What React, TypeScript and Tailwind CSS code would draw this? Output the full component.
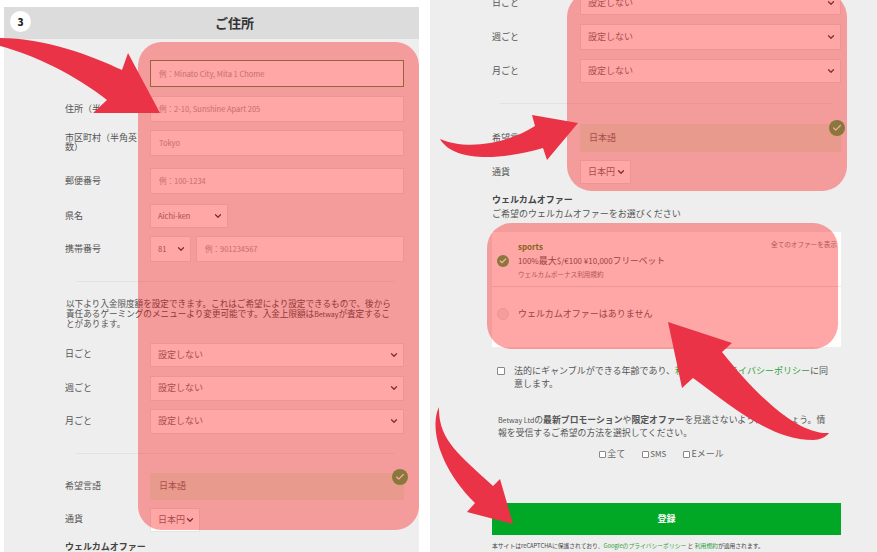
import { ChevronDown, Check } from 'lucide-react'

const font = { fontFamily: '"Noto Sans CJK JP", "Noto Sans", sans-serif' }

function Field({ placeholder, focus = false }: { placeholder: string; focus?: boolean }) {
  return (
    <input
      readOnly
      placeholder={placeholder}
      className={`w-full h-full bg-white border pl-2 pb-px text-[7.5px] outline-none placeholder:text-[#a8a8a8] ${focus ? 'border-[#5f9a58]' : 'border-[#e4e4e4]'}`}
    />
  )
}

function Pick({ value, small = false, className = '' }: { value: string; small?: boolean; className?: string }) {
  return (
    <div className={`h-full bg-white border border-[#e4e4e4] pl-[7px] pr-1 flex items-center justify-between whitespace-nowrap text-[#777] ${small ? 'text-[7.5px]' : 'text-[9px]'} ${className}`}>
      <span>{value}</span>
      <ChevronDown size={10} strokeWidth={3} className="text-[#444] shrink-0" />
    </div>
  )
}

function Row({ label, wide = false, className, children }: { label: string; wide?: boolean; className: string; children: React.ReactNode }) {
  return (
    <div className={`flex items-center ${className}`}>
      <div className={`shrink-0 text-[9px] leading-[9px] text-[#555] ${wide ? 'w-[88px] pr-[16px] pb-px' : 'w-[85px] pr-[13px] pb-[2px]'}`}>{label}</div>
      <div className="flex-1 h-full flex gap-[5px] min-w-0">{children}</div>
    </div>
  )
}

function Locked() {
  return (
    <div className="relative w-full h-full bg-[#dcecd8] pl-[9px] flex items-center text-[9px] text-[#777]">
      日本語
      <div className="absolute -right-[4px] -top-[4px] w-4 h-4 rounded-full bg-[#4ab85a] flex items-center justify-center">
        <Check size={10} strokeWidth={3} className="text-white" />
      </div>
    </div>
  )
}

function Tick({ label, className = 'text-[9px]' }: { label: string; className?: string }) {
  return (
    <span className={`flex items-center gap-px ${className}`}>
      <i className="w-[7px] h-[7px] border border-[#888] bg-white rounded-[1px]" />
      {label}
    </span>
  )
}

export default function App() {
  return (
    <div style={font} className="relative flex w-[877px] h-[552px] overflow-hidden bg-white">
      {/* ── Left panel ─────────────────────────────────────── */}
      <section className="w-[415px] ml-1 mt-[7px] shrink-0 bg-[#eeeeee] pl-[61px] pr-[15px]">
        <header className="relative -ml-[61px] -mr-[15px] h-8 bg-[#dcdcdc] flex items-center justify-center text-[13px] font-bold text-[#333] pl-[46px]">
          ご住所
          <div className="absolute left-[6px] top-[4px] w-[21px] h-[21px] rounded-full bg-white flex items-center justify-center text-[10px] font-black text-[#222]">3</div>
        </header>

        <Row label="" className="h-[27px] mt-[21px]">
          <Field placeholder="例：Minato City, Mita 1 Chome" focus />
        </Row>
        <Row label="住所（半角英数）" className="h-[26px] mt-[9px]">
          <Field placeholder="例：2-10, Sunshine Apart 205" />
        </Row>
        <Row label="市区町村（半角英数）" className="h-[26px] mt-[8px]">
          <Field placeholder="Tokyo" />
        </Row>
        <Row label="郵便番号" className="h-[26px] mt-[12px]">
          <Field placeholder="例：100-1234" />
        </Row>
        <Row label="県名" className="h-[24px] mt-[10px]">
          <Pick value="Aichi-ken" small className="w-[78px]" />
        </Row>
        <Row label="携帯番号" className="h-[26px] mt-[8px]">
          <Pick value="81" small className="w-[41px] shrink-0" />
          <Field placeholder="例：901234567" />
        </Row>

        <div className="h-px bg-[#e2e2e2] ml-[11px] mr-[9px] mt-[19px]" />
        <p className="mt-[17px] ml-px whitespace-nowrap text-[8.6px] leading-[9.5px] text-[#555]">
          以下より入金限度額を設定できます。これはご希望により設定できるもので、後から
          <br />
          責任あるゲーミングのメニューより変更可能です。入金上限額は<span className="text-[7px]">Betway</span>が査定するこ
          <br />
          とがあります。
        </p>

        <Row label="日ごと" className="h-[24px] mt-[14px]"><Pick value="設定しない" className="w-full" /></Row>
        <Row label="週ごと" className="h-[25px] mt-[9px]"><Pick value="設定しない" className="w-full" /></Row>
        <Row label="月ごと" className="h-[25px] mt-[8px]"><Pick value="設定しない" className="w-full" /></Row>

        <div className="h-px bg-[#e2e2e2] ml-[11px] mr-[9px] mt-[19px]" />

        <Row label="希望言語" className="h-[27px] mt-[19px]"><Locked /></Row>
        <Row label="通貨" className="h-[24px] mt-[8px]"><Pick value="日本円" className="w-[50px]" /></Row>
        <h3 className="mt-[8px] text-[9px] leading-[14px] font-bold text-[#444]">ウェルカムオファー</h3>
      </section>

      {/* ── Right panel ────────────────────────────────────── */}
      <section className="ml-[11px] flex-1 bg-[#eeeeee] pl-[62px] pr-[36px] pt-px">
        <Row wide label="日ごと" className="h-[25px] -mt-[11px]"><Pick value="設定しない" className="w-full" /></Row>
        <Row wide label="週ごと" className="h-[26px] mt-[9px]"><Pick value="設定しない" className="w-full" /></Row>
        <Row wide label="月ごと" className="h-[24px] mt-[9px]"><Pick value="設定しない" className="w-full" /></Row>

        <div className="h-px bg-[#e2e2e2] ml-[8px] mr-[9px] mt-[20px]" />

        <Row wide label="希望言語" className="h-[28px] mt-[20px]"><Locked /></Row>
        <Row wide label="通貨" className="h-[24px] mt-[8px]"><Pick value="日本円" className="w-[51px]" /></Row>

        <h3 className="mt-[9px] text-[9px] leading-[14px] font-bold text-[#444]">ウェルカムオファー</h3>
        <p className="text-[9px] leading-[13px] text-[#555]">ご希望のウェルカムオファーをお選びください</p>

        <div className="mt-[12px] h-[115px] bg-white text-[#666]">
          <div className="relative h-[55px] flex items-center pl-[5px] pt-[3px] border-b border-[#e8e8e8]">
            <div className="w-3 h-3 rounded-full bg-[#4ab85a] flex items-center justify-center shrink-0">
              <Check size={8} strokeWidth={4} className="text-white" />
            </div>
            <div className="ml-[9px]">
              <div className="text-[8px] leading-[10px] font-bold text-[#3f9a2a]">sports</div>
              <div className="mt-[2px] text-[9px] leading-[13px]">
                <span className="text-[8px]">100%</span>最大<span className="text-[8px]">$/€100 ¥10,000</span><span className="text-[8.7px]">フリーベット</span>
              </div>
              <div className="mt-[2px] text-[6.6px] leading-[10px] text-[#888]">ウェルカムボーナス利用規約</div>
            </div>
            <span className="absolute right-[4px] top-[7px] text-[6.6px] leading-[10px] text-[#888]">全てのオファーを表示</span>
          </div>
          <div className="h-[60px] flex items-center pl-[5px] -mt-[3px]">
            <div className="w-3 h-3 rounded-full bg-[#f0f0f0] border border-[#e4e4e4] shrink-0" />
            <span className="ml-[9px] text-[9px]">ウェルカムオファーはありません</span>
          </div>
        </div>

        <label className="mt-[17px] flex items-start pl-[5px] text-[9px] leading-[13px] text-[#555]">
          <span className="mt-[3px] w-[8px] h-[8px] bg-white border border-[#888] rounded-[1px] shrink-0" />
          <span className="ml-[9px] w-[318px]">
            法的にギャンブルができる年齢であり、<span className="text-[#2f9e3a]">利用規約とプライバシーポリシー</span>に同意します。
          </span>
        </label>

        <p className="mt-[24px] ml-[6px] w-[332px] text-[8.85px] leading-[12.5px] text-[#555]">
          <span className="text-[7px]">Betway Ltd</span>の<b>最新プロモーション</b>や<b>限定オファー</b>を見逃さないようにしましょう。情報を受信するご希望の方法を選択してください。
        </p>

        <div className="mt-[8px] flex justify-center gap-[17px] pr-[10px] leading-[14px] text-[#666]">
          <Tick label="全て" />
          <Tick label="SMS" className="text-[8px]" />
          <Tick label="Eメール" />
        </div>

        <button className="mt-[42px] w-full h-[32px] bg-[#00a826] text-white text-[9px] font-bold">登録</button>
        <p className="mt-[6px] whitespace-nowrap text-[5.8px] leading-[9px] text-[#444]">
          本サイトはreCAPTCHAに保護されており、<span className="text-[#2f9e3a]">Googleのプライバシーポリシー</span> と <span className="text-[#2f9e3a]">利用規約</span>が適用されます。
        </p>
      </section>

      {/* ── Highlight overlays ─────────────────────────────── */}
      <div className="absolute left-[138px] top-[42px] w-[281px] h-[488px] rounded-[24px] bg-[#ff0000]/35" />
      <div className="absolute left-[567px] -top-[8px] w-[280px] h-[199px] rounded-[25px] bg-[#ff0000]/35" />
      <div className="absolute left-[487px] top-[223px] w-[351px] h-[126px] rounded-[25px] bg-[#ff0000]/35" />

      {/* ── Arrows ─────────────────────────────────────────── */}
      <svg className="absolute inset-0" width="877" height="552" viewBox="0 0 877 552" fill="#ea3346">
        <path d="M0 38 C45 38 90 55 122 70 L128 53 L160 113 L93 113 L107 100 C75 75 35 55 0 46 Z" />
        <path d="M440 139 C465 150 505 145 535 126 L532 115 L578 123 L547 160 L543 148 C510 158 455 165 440 139 Z" />
        <path d="M829 433 C800 435 760 400 722 352 L732 343 L668 322 L682 388 L693 378 C730 405 770 440 813 440 C820 440 826 437 829 433 Z" />
        <path d="M439 407 C430 425 437 465 475 503 L467 512 L513 524 L500 479 L493 486 C460 455 438 440 439 407 Z" />
      </svg>
    </div>
  )
}
